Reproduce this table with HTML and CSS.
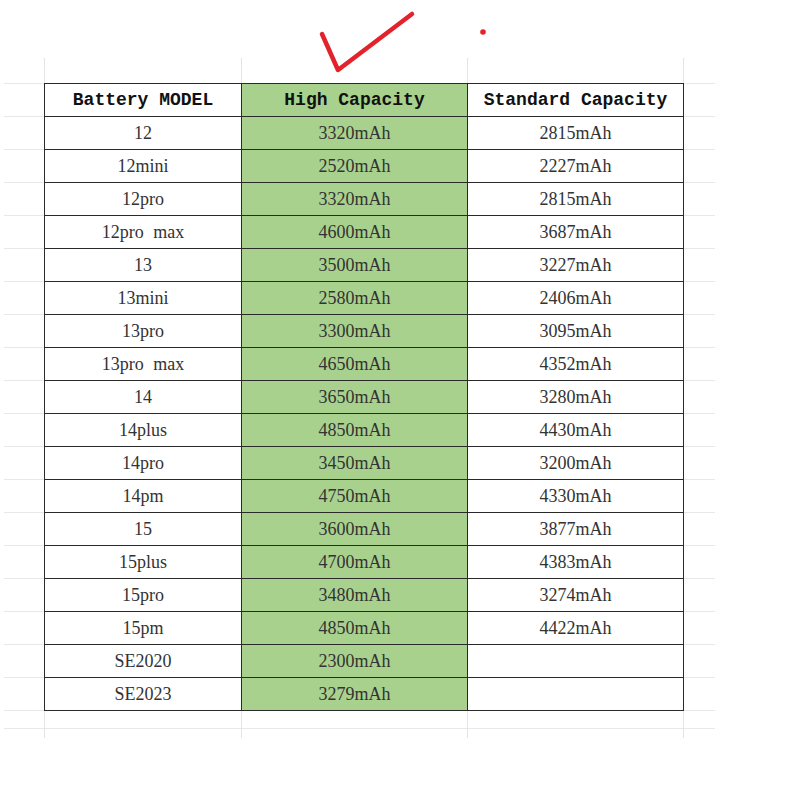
FILE: index.html
```html
<!DOCTYPE html>
<html>
<head>
<meta charset="utf-8">
<link rel="stylesheet" href="styles.css">
</head>
<body>
<div class="page">
  <div class="sheet">
    <table class="battery">
      <colgroup>
        <col class="c-model">
        <col class="c-high">
        <col class="c-std">
      </colgroup>
      <thead>
        <tr><th>Battery MODEL</th><th class="hi">High Capacity</th><th>Standard Capacity</th></tr>
      </thead>
      <tbody>
        <tr><td>12</td><td class="hi">3320mAh</td><td>2815mAh</td></tr>
        <tr><td>12mini</td><td class="hi">2520mAh</td><td>2227mAh</td></tr>
        <tr><td>12pro</td><td class="hi">3320mAh</td><td>2815mAh</td></tr>
        <tr><td>12pro max</td><td class="hi">4600mAh</td><td>3687mAh</td></tr>
        <tr><td>13</td><td class="hi">3500mAh</td><td>3227mAh</td></tr>
        <tr><td>13mini</td><td class="hi">2580mAh</td><td>2406mAh</td></tr>
        <tr><td>13pro</td><td class="hi">3300mAh</td><td>3095mAh</td></tr>
        <tr><td>13pro max</td><td class="hi">4650mAh</td><td>4352mAh</td></tr>
        <tr><td>14</td><td class="hi">3650mAh</td><td>3280mAh</td></tr>
        <tr><td>14plus</td><td class="hi">4850mAh</td><td>4430mAh</td></tr>
        <tr><td>14pro</td><td class="hi">3450mAh</td><td>3200mAh</td></tr>
        <tr><td>14pm</td><td class="hi">4750mAh</td><td>4330mAh</td></tr>
        <tr><td>15</td><td class="hi">3600mAh</td><td>3877mAh</td></tr>
        <tr><td>15plus</td><td class="hi">4700mAh</td><td>4383mAh</td></tr>
        <tr><td>15pro</td><td class="hi">3480mAh</td><td>3274mAh</td></tr>
        <tr><td>15pm</td><td class="hi">4850mAh</td><td>4422mAh</td></tr>
        <tr><td>SE2020</td><td class="hi">2300mAh</td><td></td></tr>
        <tr><td>SE2023</td><td class="hi">3279mAh</td><td></td></tr>
      </tbody>
    </table>
  </div>
  <svg class="mark" width="800" height="100" viewBox="0 0 800 100">
    <polyline points="322,34 338,70 412,14" fill="none" stroke="#e3232b" stroke-width="4.5" stroke-linecap="round" stroke-linejoin="round"/>
    <circle cx="483" cy="32" r="2.8" fill="#e3232b"/>
  </svg>
</div>
</body>
</html>
```
FILE: styles.css
```css
html, body {
  margin: 0;
  padding: 0;
  background: #ffffff;
}

.page {
  position: relative;
  width: 800px;
  height: 800px;
  padding: 58px 0 0 4px;
  box-sizing: border-box;
}

.sheet {
  width: 711px;
  height: 680px;
  padding: 25px 0 0 40px;
  box-sizing: border-box;
  background:
    linear-gradient(#e4e4e4, #e4e4e4) 40px 0 / 1px 100% no-repeat,
    linear-gradient(#e4e4e4, #e4e4e4) 237px 0 / 1px 100% no-repeat,
    linear-gradient(#e4e4e4, #e4e4e4) 463px 0 / 1px 100% no-repeat,
    linear-gradient(#e4e4e4, #e4e4e4) 679px 0 / 1px 100% no-repeat,
    linear-gradient(#e8e8e8, #e8e8e8) 0 670px / 100% 1px no-repeat,
    repeating-linear-gradient(to bottom, #e8e8e8 0 1px, transparent 1px 33px) 0 25px / 100% 628px no-repeat;
}

.battery {
  border-collapse: collapse;
  table-layout: fixed;
  width: 639px;
  background: #ffffff;
}

.c-model { width: 197px; }
.c-high { width: 226px; }
.c-std { width: 216px; }

.battery th,
.battery td {
  border: 1px solid #2a2a2a;
  height: 32px;
  padding: 0;
  text-align: center;
  vertical-align: middle;
  white-space: nowrap;
}

.battery th {
  font-family: "Liberation Mono", "DejaVu Sans Mono", monospace;
  font-weight: bold;
  font-size: 18px;
  color: #111111;
}

.battery td {
  font-family: "Liberation Serif", "DejaVu Serif", serif;
  font-size: 18px;
  color: #333333;
  word-spacing: 5px;
}

.battery .hi {
  background: #a9d18e;
}

.mark {
  position: absolute;
  left: 0;
  top: 0;
  pointer-events: none;
}
```
